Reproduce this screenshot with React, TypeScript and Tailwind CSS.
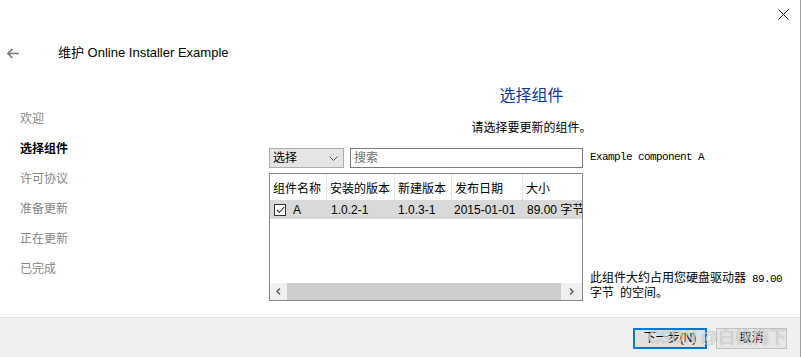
const steps = [
  { label: "欢迎", active: false },
  { label: "选择组件", active: true },
  { label: "许可协议", active: false },
  { label: "准备更新", active: false },
  { label: "正在更新", active: false },
  { label: "已完成", active: false },
];

const columns = [
  { title: "组件名称", width: 57 },
  { title: "安装的版本", width: 68 },
  { title: "新建版本", width: 57 },
  { title: "发布日期", width: 71 },
  { title: "大小", width: 80 },
];

function Mono({ children }: { children: React.ReactNode }) {
  return (
    <span className="font-['Liberation_Mono',monospace] text-[11px] tracking-[-0.6px]">
      {children}
    </span>
  );
}

export default function App() {
  return (
    <div className="relative flex h-[357px] w-[801px] flex-col overflow-hidden border-r border-[#a0a0a0] bg-white font-['Liberation_Sans','Noto_Sans_CJK_SC',sans-serif] text-[12px] text-black">
      {/* close */}
      <svg className="absolute left-[778px] top-[9px]" width="11" height="11" viewBox="0 0 11 11">
        <path d="M0.5 0.5 L10.5 10.5 M10.5 0.5 L0.5 10.5" stroke="#111" strokeWidth="1" fill="none" />
      </svg>

      <div className="h-[30px]" />

      {/* title row */}
      <div className="flex h-[46px] items-center">
        <svg className="ml-[7px]" width="13" height="11" viewBox="0 0 13 11">
          <path d="M12 5.5 H1.5 M5.5 1 L1 5.5 L5.5 10" stroke="#7a7a7a" strokeWidth="1.6" fill="none" />
        </svg>
        <span className="ml-[38px] text-[13px]">维护 Online Installer Example</span>
      </div>

      {/* body */}
      <div className="flex flex-1">
        <div className="flex w-[269px] flex-col pl-[20px] pt-[28px]">
          {steps.map((s) => (
            <div
              key={s.label}
              className={`h-[30px] leading-[30px] ${s.active ? "font-bold text-black" : "text-[#858585]"}`}
            >
              {s.label}
            </div>
          ))}
        </div>

        <div className="flex flex-1 flex-col pr-[6px]">
          <div className="mt-[10px] h-[20px] text-center text-[16px] leading-[20px] text-[#0a3a9c]">选择组件</div>
          <div className="mt-[14px] h-[16px] text-center leading-[16px]">请选择要更新的组件。</div>

          <div className="mt-[12px] flex">
            <div className="flex w-[314px] flex-col">
              <div className="flex h-[20px] gap-[6px]">
                <div className="flex w-[75px] items-center justify-between border border-[#adadad] bg-[#e5e5e5] pl-[3px] pr-[5px]">
                  <span>选择</span>
                  <svg width="9" height="5" viewBox="0 0 9 5">
                    <path d="M0.5 0.5 L4.5 4.5 L8.5 0.5" stroke="#555" strokeWidth="1" fill="none" />
                  </svg>
                </div>
                <div className="flex flex-1 items-center border border-[#7a7a7a] pl-[3px] text-[#6d6d6d]">搜索</div>
              </div>

              <div className="mt-[5px] flex h-[128px] flex-col overflow-hidden border border-[#828790]">
                <div className="flex h-[26px] shrink-0">
                  {columns.map((c) => (
                    <div
                      key={c.title}
                      style={{ width: c.width }}
                      className="flex shrink-0 items-center whitespace-nowrap border-r border-[#e5e5e5] pl-[3px] pt-[4px]"
                    >
                      {c.title}
                    </div>
                  ))}
                </div>
                <div className="flex h-[19px] shrink-0 items-center whitespace-nowrap bg-[#d9d9d9]">
                  <div style={{ width: 57 }} className="flex shrink-0 items-center pl-[4px]">
                    <div className="flex h-[12px] w-[12px] items-center justify-center border border-[#333] bg-white">
                      <svg width="9" height="8" viewBox="0 0 9 8">
                        <path d="M0.8 4 L3.3 6.5 L8.2 1" stroke="#333" strokeWidth="1.1" fill="none" />
                      </svg>
                    </div>
                    <span className="ml-[7px]">A</span>
                  </div>
                  <div style={{ width: 68 }} className="shrink-0 pl-[4px]">1.0.2-1</div>
                  <div style={{ width: 57 }} className="shrink-0 pl-[3px]">1.0.3-1</div>
                  <div style={{ width: 71 }} className="shrink-0 pl-[2px]">2015-01-01</div>
                  <div style={{ width: 80 }} className="shrink-0 pl-[4px]">89.00 字节</div>
                </div>
                <div className="flex-1" />
                <div className="flex h-[17px] shrink-0 items-center bg-[#f0f0f0]">
                  <div className="flex h-full w-[17px] items-center justify-center">
                    <svg width="5" height="7" viewBox="0 0 5 7">
                      <path d="M4 0.5 L1 3.5 L4 6.5" stroke="#606060" strokeWidth="1.5" fill="none" />
                    </svg>
                  </div>
                  <div className="h-full flex-1 bg-[#cdcdcd]" />
                  <div className="flex h-full w-[21px] items-center justify-center">
                    <svg width="5" height="7" viewBox="0 0 5 7">
                      <path d="M1 0.5 L4 3.5 L1 6.5" stroke="#606060" strokeWidth="1.5" fill="none" />
                    </svg>
                  </div>
                </div>
              </div>
            </div>

            <div className="ml-[7px] flex flex-1 flex-col justify-between leading-[14px]">
              <div className="pt-[1px]">
                <Mono>Example component A</Mono>
              </div>
              <div>
                <div>
                  此组件大约占用您硬盘驱动器<Mono> 89.00</Mono>
                </div>
                <div>
                  字节<Mono> </Mono>的空间。
                </div>
              </div>
            </div>
          </div>
        </div>
      </div>

      {/* footer */}
      <div className="relative flex h-[40px] shrink-0 items-center justify-end border-t border-[#dfdfdf] bg-[#f0f0f0] pr-[13px] pt-[1px]">
        <div className="flex h-[21px] w-[74px] items-center justify-center border-2 border-[#0078d7] bg-[#e1e1e1]">
          下一步(N)
        </div>
        <div className="ml-[9px] flex h-[21px] w-[71px] items-center justify-center border border-[#c2c2c2] bg-[#e6e6e6]">
          取消
        </div>
        <div className="pointer-events-none absolute left-[648px] top-[11px] whitespace-nowrap text-[17px] leading-[18px] text-white/70 [text-shadow:0_0_1px_rgba(0,0,0,0.45)]">
          CSDN @白桃梅下
        </div>
      </div>
    </div>
  );
}
